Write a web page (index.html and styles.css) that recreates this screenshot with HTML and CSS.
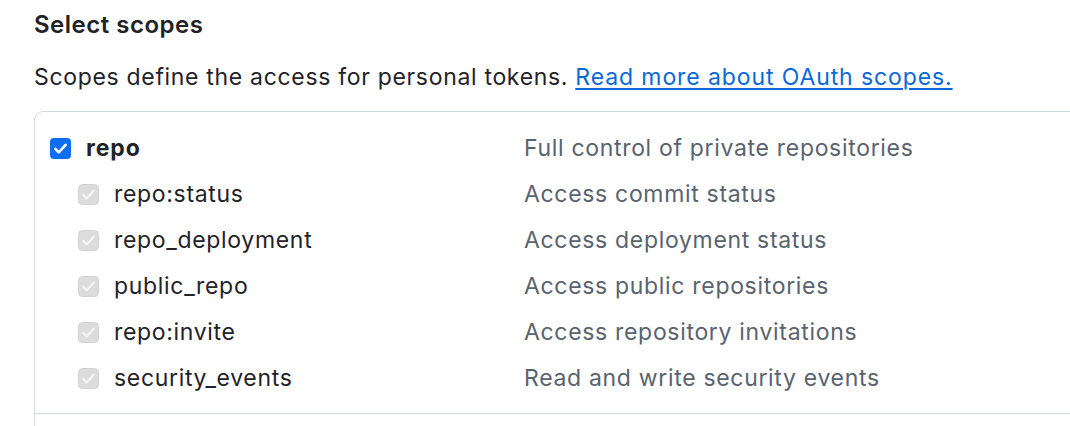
FILE: index.html
```html
<!DOCTYPE html>
<html lang="en">
<head>
<meta charset="utf-8">
<title>Select scopes</title>
<link rel="stylesheet" href="styles.css">
</head>
<body>
<div class="page">
  <h3 class="title">Select scopes</h3>
  <p class="intro">Scopes define the access for personal tokens. <a class="link" href="#">Read more about OAuth scopes.</a></p>
  <div class="box">
    <div class="group">
      <div class="row parent">
        <label class="label">
          <svg class="cb" width="21" height="21" viewBox="0 0 21 21"><rect x="0" y="0" width="21" height="21" rx="4" fill="#0b6ff5"/><path d="M5.3 10.8 L8.8 14.3 L15.6 6.8" fill="none" stroke="#fff" stroke-width="2.6" stroke-linecap="round" stroke-linejoin="round"/></svg>
          <span class="name strong">repo</span>
        </label>
        <span class="desc">Full control of private repositories</span>
      </div>
      <div class="row child">
        <label class="label">
          <svg class="cb" width="21" height="21" viewBox="0 0 21 21"><rect x="0.5" y="0.5" width="20" height="20" rx="4" fill="#dcdcdc" stroke="#d2d2d2"/><path d="M5.3 10.8 L8.8 14.3 L15.6 6.8" fill="none" stroke="#f4f4f4" stroke-width="2.4" stroke-linecap="round" stroke-linejoin="round"/></svg>
          <span class="name">repo:status</span>
        </label>
        <span class="desc">Access commit status</span>
      </div>
      <div class="row child">
        <label class="label">
          <svg class="cb" width="21" height="21" viewBox="0 0 21 21"><rect x="0.5" y="0.5" width="20" height="20" rx="4" fill="#dcdcdc" stroke="#d2d2d2"/><path d="M5.3 10.8 L8.8 14.3 L15.6 6.8" fill="none" stroke="#f4f4f4" stroke-width="2.4" stroke-linecap="round" stroke-linejoin="round"/></svg>
          <span class="name">repo_deployment</span>
        </label>
        <span class="desc">Access deployment status</span>
      </div>
      <div class="row child">
        <label class="label">
          <svg class="cb" width="21" height="21" viewBox="0 0 21 21"><rect x="0.5" y="0.5" width="20" height="20" rx="4" fill="#dcdcdc" stroke="#d2d2d2"/><path d="M5.3 10.8 L8.8 14.3 L15.6 6.8" fill="none" stroke="#f4f4f4" stroke-width="2.4" stroke-linecap="round" stroke-linejoin="round"/></svg>
          <span class="name">public_repo</span>
        </label>
        <span class="desc">Access public repositories</span>
      </div>
      <div class="row child">
        <label class="label">
          <svg class="cb" width="21" height="21" viewBox="0 0 21 21"><rect x="0.5" y="0.5" width="20" height="20" rx="4" fill="#dcdcdc" stroke="#d2d2d2"/><path d="M5.3 10.8 L8.8 14.3 L15.6 6.8" fill="none" stroke="#f4f4f4" stroke-width="2.4" stroke-linecap="round" stroke-linejoin="round"/></svg>
          <span class="name">repo:invite</span>
        </label>
        <span class="desc">Access repository invitations</span>
      </div>
      <div class="row child">
        <label class="label">
          <svg class="cb" width="21" height="21" viewBox="0 0 21 21"><rect x="0.5" y="0.5" width="20" height="20" rx="4" fill="#dcdcdc" stroke="#d2d2d2"/><path d="M5.3 10.8 L8.8 14.3 L15.6 6.8" fill="none" stroke="#f4f4f4" stroke-width="2.4" stroke-linecap="round" stroke-linejoin="round"/></svg>
          <span class="name">security_events</span>
        </label>
        <span class="desc">Read and write security events</span>
      </div>
    </div>
    <div class="group"></div>
  </div>
</div>
</body>
</html>
```

FILE: styles.css
```css
html, body {
  margin: 0;
  padding: 0;
  overflow: hidden;
  background: #ffffff;
}

body {
  font-family: Inter, "Liberation Sans", Arial, sans-serif;
  font-size: 23px;
  letter-spacing: 0.68px;
  color: #1f2328;
}

.page {
  padding-left: 34px;
  padding-top: 7px;
}

.title {
  margin: 0;
  font-size: 24px;
  letter-spacing: 0.5px;
  line-height: 36px;
  font-weight: 600;
}

.intro {
  margin: 18px 0 0 0;
  line-height: 32px;
}

.link {
  color: #0969da;
  letter-spacing: 0.9px;
  text-decoration: underline;
  text-decoration-thickness: 2px;
  text-underline-offset: 3px;
}

.box {
  margin-top: 18px;
  width: 1100px;
  border: 1px solid #d1d9e0;
  border-radius: 9px 0 0 0;
  height: 400px;
}

.group {
  padding: 13px 0 12px 0;
  border-bottom: 1px solid #d1d9e0;
}

.row {
  display: grid;
  grid-template-columns: 489px 1fr;
  align-items: center;
  height: 46px;
}

.label {
  display: flex;
  align-items: center;
  gap: 15px;
  padding-left: 15px;
}

.child .label {
  padding-left: 43px;
}

.cb {
  display: block;
  flex: none;
}

.name {
  line-height: 30px;
}

.strong {
  font-weight: 700;
  letter-spacing: 0.9px;
}

.desc {
  color: #59636e;
  line-height: 30px;
}
```
